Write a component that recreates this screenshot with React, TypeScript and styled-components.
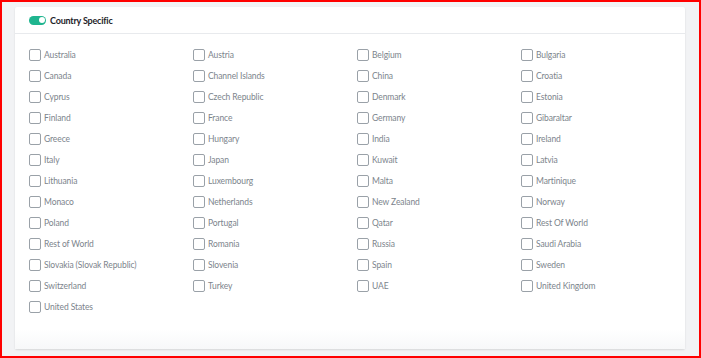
import styled, { createGlobalStyle } from 'styled-components';

const countries = [
  'Australia', 'Austria', 'Belgium', 'Bulgaria',
  'Canada', 'Channel Islands', 'China', 'Croatia',
  'Cyprus', 'Czech Republic', 'Denmark', 'Estonia',
  'Finland', 'France', 'Germany', 'Gibaraltar',
  'Greece', 'Hungary', 'India', 'Ireland',
  'Italy', 'Japan', 'Kuwait', 'Latvia',
  'Lithuania', 'Luxembourg', 'Malta', 'Martinique',
  'Monaco', 'Netherlands', 'New Zealand', 'Norway',
  'Poland', 'Portugal', 'Qatar', 'Rest Of World',
  'Rest of World', 'Romania', 'Russia', 'Saudi Arabia',
  'Slovakia (Slovak Republic)', 'Slovenia', 'Spain', 'Sweden',
  'Switzerland', 'Turkey', 'UAE', 'United Kingdom',
  'United States',
];

const GlobalStyle = createGlobalStyle`
  html, body {
    margin: 0;
    padding: 0;
  }
  body {
    width: 701px;
    height: 358px;
    box-sizing: border-box;
    border: 2px solid #ff0000;
    background: #f2f3f5;
    font-family: Lato, 'Noto Sans', sans-serif;
    overflow: hidden;
  }
`;

const App = () => {
  return (
    <>
      <GlobalStyle />
      <Page>
        <Card>
          <Header>
            <Toggle>
              <Knob />
            </Toggle>
            <Title>Country Specific</Title>
          </Header>
          <Grid>
            {countries.map((name, idx) => (
              <Option key={idx}>
                <Box />
                <Label>{name}</Label>
              </Option>
            ))}
          </Grid>
          <Footer />
        </Card>
      </Page>
    </>
  );
};

export default App;

const Page = styled.div`
  padding: 5px 15px 7px 13px;
  height: 354px;
  box-sizing: border-box;
  display: flex;
`;

const Card = styled.div`
  flex: 1;
  display: flex;
  flex-direction: column;
  background: #ffffff;
  border-radius: 2px;
  box-shadow: 0 1px 2px rgba(0, 0, 0, 0.12);
`;

const Header = styled.div`
  height: 26px;
  display: flex;
  align-items: center;
  gap: 4px;
  padding-left: 14px;
  border-bottom: 1px solid #e8eaed;
`;

const Toggle = styled.div`
  width: 17px;
  height: 9px;
  border-radius: 5px;
  background: #1fb58f;
  display: flex;
  align-items: center;
  justify-content: flex-end;
  padding: 0 1.5px;
  box-sizing: border-box;
`;

const Knob = styled.div`
  width: 6px;
  height: 6px;
  border-radius: 50%;
  background: #ffffff;
`;

const Title = styled.span`
  font-size: 9px;
  font-weight: 700;
  color: #1e2329;
  letter-spacing: -0.2px;
`;

const Grid = styled.div`
  display: grid;
  grid-template-columns: repeat(4, 164px);
  grid-auto-rows: 21px;
  padding: 10px 0 0 14px;
`;

const Option = styled.label`
  display: flex;
  align-items: center;
  gap: 3px;
`;

const Box = styled.span`
  width: 12px;
  height: 12px;
  box-sizing: border-box;
  border: 1.5px solid #9aa1a8;
  border-radius: 2px;
`;

const Label = styled.span`
  font-size: 8.5px;
  color: #7c848c;
  letter-spacing: -0.1px;
`;

const Footer = styled.div`
  margin-top: auto;
  height: 20px;
  background: linear-gradient(#ffffff, #f7f8f9);
`;
